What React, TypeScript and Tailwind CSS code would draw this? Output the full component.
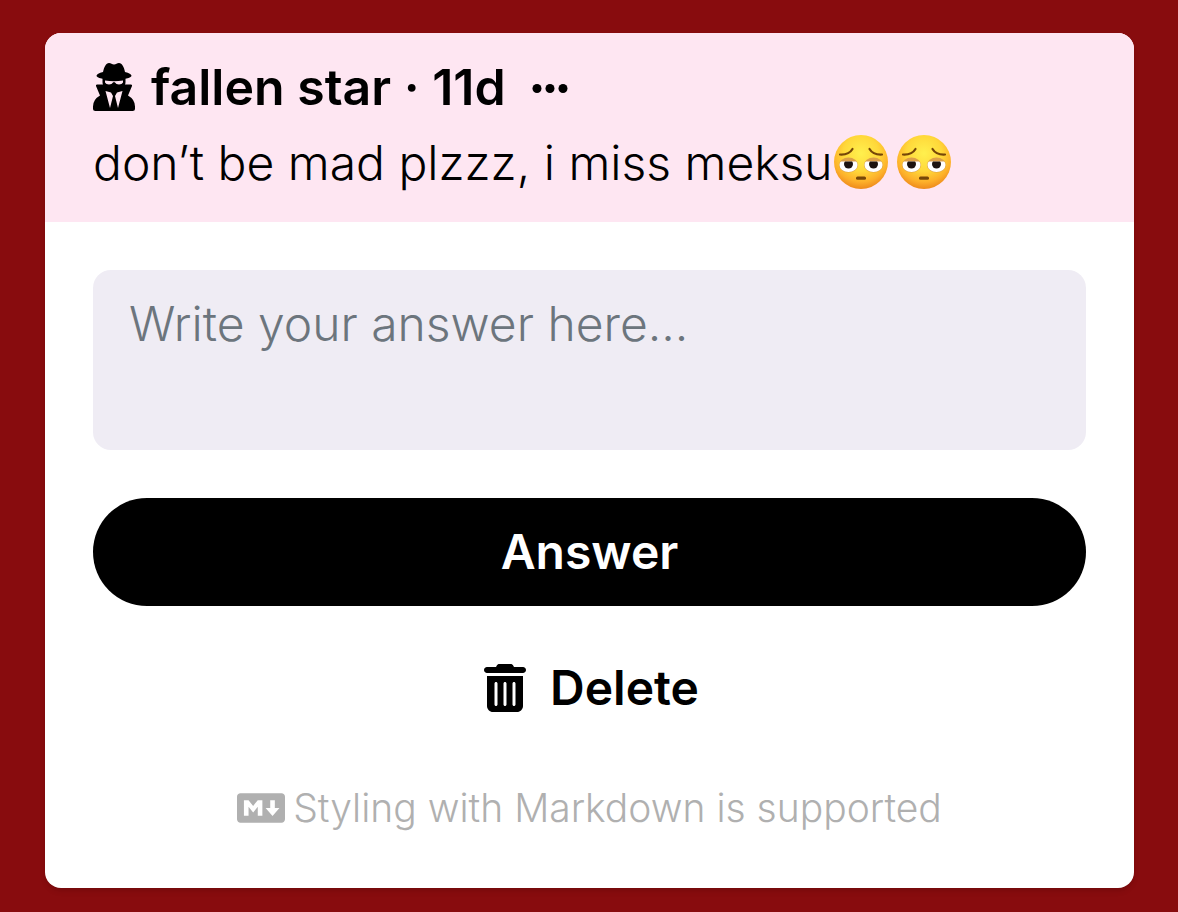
import { useState } from "react";
import { FaMarkdown } from "react-icons/fa";
import { FaTrashCan } from "react-icons/fa6";

function SecretIcon() {
  return (
    <svg viewBox="0 0 42 48" className="mr-4 h-12 w-[42px] shrink-0" fill="currentColor" aria-hidden="true">
      <path d="M10 9C11 4 13 0 16 0C18 0 19 1.500 21 1.500C23 1.500 24 0 26 0C29 0 31 4 32 9C36 10 38.500 11.500 38.500 12.800C38.500 15 31 16.800 21 16.800C11 16.800 3.500 15 3.500 12.800C3.500 11.500 6 10 10 9Z" />
      <path
        fillRule="evenodd"
        d="M9.500 15H32.500V19Q32.500 20.500 32 21.500H38Q39.500 21.500 39 23L35 32.500Q42 36.500 42 43.500V45.500Q42 48 39.500 48H2.500Q0 48 0 45.500V43.500Q0 36.500 7 32.500L3 23Q2.500 21.500 4 21.500H10Q9.500 20.500 9.500 19ZM12 17.500V19.500Q13 21.500 16 21.500Q19 21.500 20 19.500Q21 18.500 22 19.500Q23 21.500 26 21.500Q29 21.500 30 19.500V17.500Q21 19 12 17.500ZM12.500 28L17 45L20 33L18 29.500ZM29.500 28L25 45L22 33L24 29.500Z"
      />
    </svg>
  );
}

function PensiveEmoji({ id }: { id: string }) {
  return (
    <svg viewBox="0 0 56 56" className="size-14 shrink-0" role="img" aria-label="tired pensive face">
      <defs>
        <radialGradient id={`${id}-face`} cx="50%" cy="34%" r="66%">
          <stop offset="0" stopColor="#fff04e" />
          <stop offset="0.5" stopColor="#ffd83a" />
          <stop offset="0.8" stopColor="#fdb02a" />
          <stop offset="1" stopColor="#ee8a1c" />
        </radialGradient>
        <clipPath id={`${id}-eyes`}>
          <path d="M5 26.500H51V40H5Z" />
        </clipPath>
      </defs>
      <circle cx="28" cy="27" r="27" fill={`url(#${id}-face)`} />
      <ellipse cx="15.500" cy="30" rx="9.500" ry="7.500" fill="#dca048" />
      <ellipse cx="40.500" cy="30" rx="9.500" ry="7.500" fill="#dca048" />
      <g clipPath={`url(#${id}-eyes)`}>
        <ellipse cx="15.500" cy="30" rx="9" ry="7" fill="#fff" />
        <ellipse cx="40.500" cy="30" rx="9" ry="7" fill="#fff" />
        <circle cx="15.500" cy="29" r="4.500" fill="#1c1310" />
        <circle cx="40.500" cy="29" r="4.500" fill="#1c1310" />
      </g>
      <path d="M7 19.500Q16 20 19.500 14M49 19.500Q40 20 36.500 14" fill="none" stroke="#764708" strokeWidth="2.200" strokeLinecap="round" />
      <rect x="23" y="41.500" width="10" height="3.200" rx="1.500" fill="#764708" />
    </svg>
  );
}

export default function App() {
  const [answer, setAnswer] = useState("");

  return (
    <main className="min-h-screen bg-[#880c0e] pt-[33px] pr-11 pb-6 pl-[45px] font-['Inter',sans-serif] text-black">
      <article className="overflow-hidden rounded-2xl bg-white shadow-md">
        <header className="flex flex-col gap-1 bg-[#fee6f2] px-12 pt-[18px] pb-[23px]">
          <div className="flex items-center text-[50px] leading-[72px] font-semibold">
            <SecretIcon />
            <h1>fallen star · 11d</h1>
            <button type="button" aria-label="More options" className="ml-6">
              <svg viewBox="0 0 38 12" className="h-3 w-[38px]" fill="currentColor">
                <circle cx="7" cy="7.500" r="4.500" />
                <circle cx="20" cy="7.500" r="4.500" />
                <circle cx="33" cy="7.500" r="4.500" />
              </svg>
            </button>
          </div>
          <p className="flex items-center text-[48px] leading-[72px] font-light">
            don’t be mad plzzz, i miss meksu
            <span className="flex gap-[7px]">
              <PensiveEmoji id="first" />
              <PensiveEmoji id="second" />
            </span>
          </p>
        </header>

        <form className="flex flex-col p-12" onSubmit={(e) => e.preventDefault()}>
          <textarea
            aria-label="Your answer"
            placeholder="Write your answer here..."
            value={answer}
            onChange={(e) => setAnswer(e.target.value)}
            className="h-[180px] resize-none rounded-[18px] bg-[#efecf4] px-9 py-[18px] text-[48px] leading-[72px] font-light outline-none placeholder:text-[#6c757d]"
          />
          <button type="submit" className="mt-12 h-[108px] rounded-full bg-black text-[48px] leading-[72px] font-semibold text-white">
            Answer
          </button>
          <button type="button" className="mt-7 flex h-[108px] items-center justify-center gap-6 pl-1 text-[48px] leading-[72px] font-semibold">
            <FaTrashCan className="h-12 w-[42px]" />
            Delete
          </button>
          <p className="mt-9 mb-0.5 flex items-center justify-center gap-2 text-[39px] leading-[60px] font-light text-[#b0b0b0]">
            <FaMarkdown className="size-12" />
            Styling with Markdown is supported
          </p>
        </form>
      </article>
    </main>
  );
}
